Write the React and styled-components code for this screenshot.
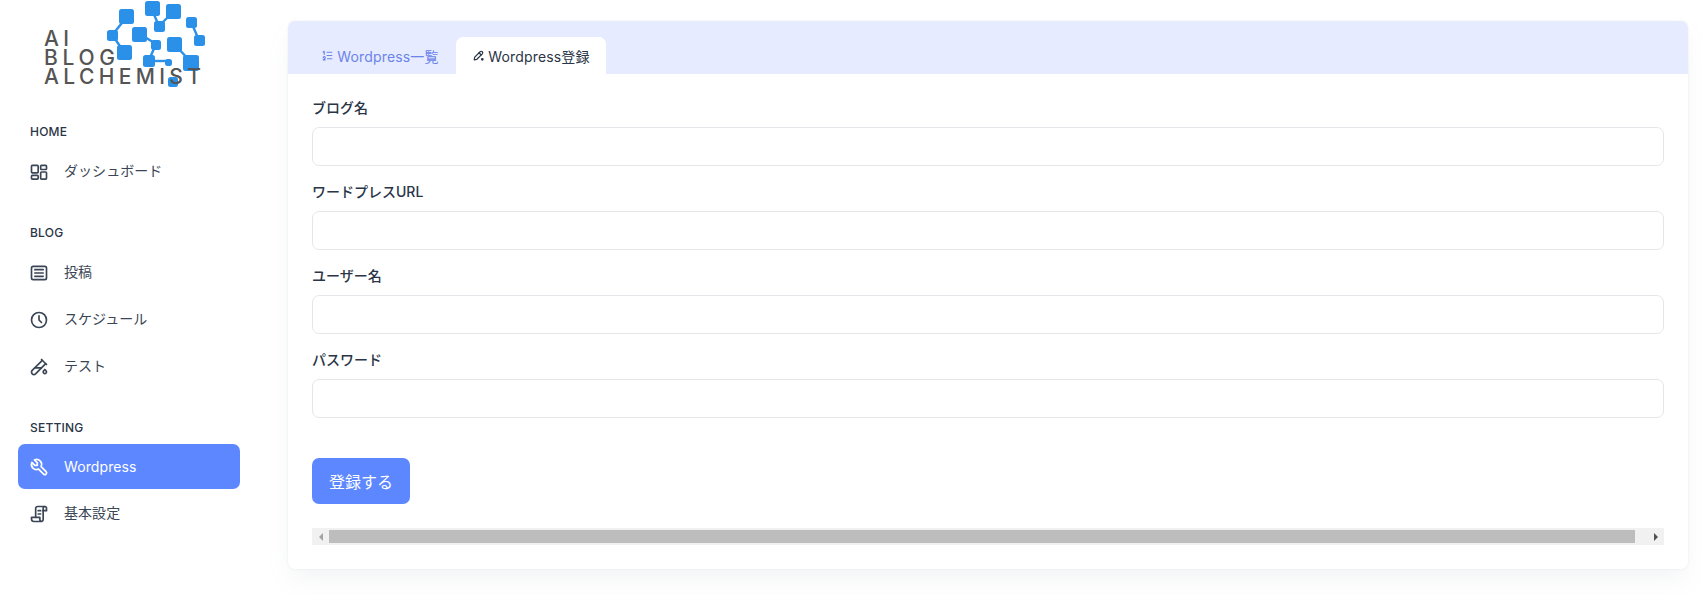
import React from "react";
import styled, { createGlobalStyle } from "styled-components";
import {
  TbArticle,
  TbClock,
  TbTestPipe,
  TbTool,
  TbListNumbers,
} from "react-icons/tb";

const FONT = `"Inter", "Noto Sans CJK JP", "Noto Sans", sans-serif`;

const Global = createGlobalStyle`
  html, body { margin: 0; padding: 0; background: #fff; }
  body { font-family: ${FONT}; color: #2a3547; }
  * { box-sizing: border-box; }
`;

const Page = styled.div`
  display: flex;
  width: 1703px;
  height: 595px;
  overflow: hidden;
  background: #fff;
`;

const Sidebar = styled.aside`
  flex: 0 0 258px;
  padding: 0 0 0 18px;
`;

const LogoBox = styled.div`
  height: 112px;
`;

const LogoSvg = styled.svg`
  display: block;
  margin-left: -18px;
`;

const Section = styled.section`
  margin-bottom: ${(p) => p.$gap || 0}px;
`;

const SectionTitle = styled.div`
  height: ${(p) => p.$h || 38}px;
  padding-left: 12px;
  padding-top: ${(p) => p.$top || 12}px;
  font-size: 12px;
  line-height: 15px;
  font-weight: 500;
  letter-spacing: 0.2px;
  color: #2a3547;
`;

const Nav = styled.div`
  width: 222px;
  display: flex;
  flex-direction: column;
  gap: 2px;
`;

const NavItem = styled.div`
  display: flex;
  align-items: center;
  height: 45px;
  padding-left: 11px;
  gap: 15px;
  border-radius: 7px;
  font-size: 14px;
  font-weight: 400;
  color: ${(p) => (p.$active ? "#fff" : "#3a4555")};
  background: ${(p) => (p.$active ? "#5d87ff" : "transparent")};
  svg { flex: 0 0 20px; width: 20px; height: 20px; }
`;

const NavText = styled.span`
  padding-bottom: ${(p) => (p.$latin ? 0 : 3)}px;
  letter-spacing: ${(p) => (p.$latin ? "0.1px" : "0.05px")};
`;

const Main = styled.main`
  flex: 1;
  min-width: 0;
  padding: 21px 15px 0 30px;
`;

const Card = styled.div`
  height: 548px;
  border-radius: 7px;
  background: #fff;
  box-shadow: rgba(145, 158, 171, 0.2) 0 0 2px 0, rgba(145, 158, 171, 0.12) 0 12px 24px -4px;
  overflow: hidden;
`;

const TabBar = styled.div`
  display: flex;
  align-items: flex-end;
  height: 53px;
  padding-left: 16px;
  background: #e6ebff;
`;

const Tab = styled.div`
  display: flex;
  align-items: center;
  justify-content: center;
  gap: 3px;
  width: ${(p) => (p.$active ? 150 : 152)}px;
  height: 37px;
  border-radius: 7px 7px 0 0;
  font-size: 14px;
  font-weight: 400;
  letter-spacing: 0.15px;
  color: ${(p) => (p.$active ? "#2a3547" : "#6c84ea")};
  background: ${(p) => (p.$active ? "#fff" : "transparent")};
  svg { width: 13px; height: 13px; }
`;

const Body = styled.div`
  padding: 23px 24px 0;
`;

const Field = styled.div`
  display: flex;
  flex-direction: column;
  height: 84px;
`;

const Label = styled.label`
  height: 30px;
  padding-top: 1px;
  font-size: 14px;
  line-height: 20px;
  font-weight: 500;
  color: #2a3547;
`;

const Input = styled.input`
  display: block;
  width: 100%;
  height: 39px;
  border: 1px solid #e4e6ea;
  border-radius: 7px;
  background: #fff;
  outline: none;
`;

const Submit = styled.button`
  display: block;
  width: 98px;
  height: 46px;
  margin-top: 25px;
  border: 0;
  border-radius: 7px;
  background: #5d87ff;
  color: #fff;
  font-family: ${FONT};
  font-size: 16px;
  font-weight: 400;
`;

const ScrollTrack = styled.div`
  display: flex;
  align-items: center;
  height: 17px;
  margin-top: 24px;
  background: #f1f1f1;
`;

const ScrollEnd = styled.div`
  flex: 0 0 ${(p) => p.$w || 17}px;
  display: flex;
  align-items: center;
  justify-content: ${(p) => (p.$w ? "flex-end" : "center")};
  padding-right: ${(p) => (p.$w ? 5 : 0)}px;
  svg { display: block; }
`;

const ScrollThumb = styled.div`
  flex: 1;
  height: 13px;
  background: #bdbdbd;
`;

const squares = [
  [119, 9, 15], [145, 1, 15], [166, 4, 15], [186, 17, 11], [194, 35, 11],
  [154, 21, 11], [107, 30, 11], [132, 27, 15], [151, 40, 10], [117, 45, 15],
  [167, 37, 15], [143, 55, 12], [165, 59, 7], [183, 55, 16], [168, 77, 10],
];

const links = [
  "M126 18 L113 34",
  "M113 36 L124 52",
  "M152 10 L159 26",
  "M173 12 L159 26",
  "M191 22 L199 40",
  "M140 34 L156 44",
  "M156 44 L149 60",
  "M149 61 L168 61",
  "M175 45 L191 62",
];

function Logo() {
  return (
    <LogoSvg width="240" height="112" viewBox="0 0 240 112">
      <g fill="#2b90e8">
        {squares.map(([x, y, s]) => (
          <rect key={`${x}-${y}`} x={x} y={y} width={s} height={s} rx="2.5" />
        ))}
      </g>
      <g stroke="#2b90e8" strokeWidth="2.4" fill="none">
        {links.map((d) => (
          <path key={d} d={d} />
        ))}
      </g>
      <g fill="#555" fontFamily="Inter, sans-serif" fontSize="21" fontWeight="500">
        <text x="44" y="46" textLength="25" lengthAdjust="spacing">AI</text>
        <text x="44" y="65" textLength="71" lengthAdjust="spacing">BLOG</text>
        <text x="44" y="84" textLength="157" lengthAdjust="spacing">ALCHEMIST</text>
      </g>
    </LogoSvg>
  );
}

function DashboardIcon() {
  return (
    <svg viewBox="0 0 24 24" fill="none" stroke="currentColor" strokeWidth="2">
      <rect x="3" y="4" width="8" height="9" rx="1" />
      <rect x="3" y="16" width="8" height="4.5" rx="1" />
      <rect x="14" y="4" width="7" height="5" rx="1" />
      <rect x="14" y="12" width="7" height="8.5" rx="1" />
    </svg>
  );
}

function ScrollIcon() {
  return (
    <svg viewBox="0 0 24 24" fill="none" stroke="currentColor" strokeWidth="2" strokeLinecap="round" strokeLinejoin="round">
      <path d="M8 16V5.5A2.5 2.5 0 0 1 10.5 3H19a2 2 0 0 1 2 2v3h-4" />
      <path d="M17 8V5a2 2 0 0 1 2-2" />
      <path d="M17 8v10.5a2.5 2.5 0 0 1-2.5 2.5H6a3 3 0 0 1-3-3v-2h10v2a3 3 0 0 0 1.5 3" />
      <path d="M11 8h3M11 12h3" />
    </svg>
  );
}

function PencilIcon() {
  return (
    <svg viewBox="0 0 24 24" fill="none" stroke="currentColor" strokeWidth="2.2" strokeLinecap="round" strokeLinejoin="round">
      <path d="M4 20l1-5L15 5a2.8 2.8 0 0 1 4 4L9 19z" />
      <path d="M13 7l4 4" />
      <circle cx="19" cy="19" r="1.4" fill="currentColor" />
    </svg>
  );
}

function ArrowLeft() {
  return (
    <svg width="6" height="8" viewBox="0 0 6 8"><path d="M5 0v8L1 4z" fill="#a3a3a3" /></svg>
  );
}

function ArrowRight() {
  return (
    <svg width="6" height="8" viewBox="0 0 6 8"><path d="M1 0v8l4-4z" fill="#505050" /></svg>
  );
}

const fields = ["ブログ名", "ワードプレスURL", "ユーザー名", "パスワード"];

export default function App() {
  return (
    <Page>
      <Global />
      <Sidebar>
        <LogoBox>
          <Logo />
        </LogoBox>
        <Section $gap={18}>
          <SectionTitle $h={37}>HOME</SectionTitle>
          <Nav>
            <NavItem><DashboardIcon /><NavText>ダッシュボード</NavText></NavItem>
          </Nav>
        </Section>
        <Section $gap={17}>
          <SectionTitle $top={13}>BLOG</SectionTitle>
          <Nav>
            <NavItem><TbArticle /><NavText>投稿</NavText></NavItem>
            <NavItem><TbClock /><NavText>スケジュール</NavText></NavItem>
            <NavItem><TbTestPipe /><NavText>テスト</NavText></NavItem>
          </Nav>
        </Section>
        <Section>
          <SectionTitle $top={14}>SETTING</SectionTitle>
          <Nav>
            <NavItem $active><TbTool /><NavText $latin>Wordpress</NavText></NavItem>
            <NavItem><ScrollIcon /><NavText>基本設定</NavText></NavItem>
          </Nav>
        </Section>
      </Sidebar>
      <Main>
        <Card>
          <TabBar>
            <Tab><TbListNumbers />Wordpress一覧</Tab>
            <Tab $active><PencilIcon />Wordpress登録</Tab>
          </TabBar>
          <Body>
            {fields.map((f) => (
              <Field key={f}>
                <Label>{f}</Label>
                <Input />
              </Field>
            ))}
            <Submit>登録する</Submit>
            <ScrollTrack>
              <ScrollEnd><ArrowLeft /></ScrollEnd>
              <ScrollThumb />
              <ScrollEnd $w={29}><ArrowRight /></ScrollEnd>
            </ScrollTrack>
          </Body>
        </Card>
      </Main>
    </Page>
  );
}
